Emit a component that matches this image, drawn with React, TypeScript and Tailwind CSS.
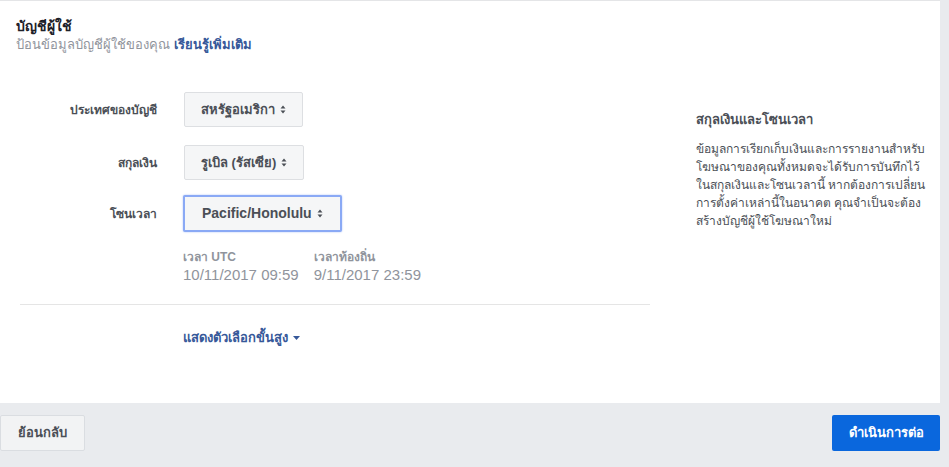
import React from 'react';

const font = { fontFamily: '"Liberation Sans", "Noto Sans", "DejaVu Sans", sans-serif' };

function SortArrows() {
  return (
    <svg width="6" height="9" viewBox="0 0 6 9" className="ml-[5px] shrink-0">
      <path d="M3 0.5 L5.5 3.5 L0.5 3.5 Z" fill="#4b4f56" />
      <path d="M3 8.5 L5.5 5.5 L0.5 5.5 Z" fill="#4b4f56" />
    </svg>
  );
}

function Select({ label, focused }: { label: string; focused?: boolean }) {
  return (
    <div
      className={`flex items-center rounded-[2px] bg-[#f5f6f7] font-bold text-[#4b4f56] ${
        focused
          ? 'h-[37px] px-[17px] border-2 border-[#8aa9f5] text-[14px] shadow-[0_0_2px_#a6bdf7]'
          : 'h-[35px] px-[16px] border border-[#dddfe2] text-[13px]'
      }`}
    >
      {label}
      <SortArrows />
    </div>
  );
}

const rows = [
  { label: 'ประเทศของบัญชี', value: 'สหรัฐอเมริกา', gap: 'mt-0' },
  { label: 'สกุลเงิน', value: 'รูเบิล (รัสเซีย)', gap: 'mt-[18px]' },
  { label: 'โซนเวลา', value: 'Pacific/Honolulu', focused: true, gap: 'mt-[15px]' },
];

export default function App() {
  return (
    <div className="w-[949px] h-[467px] bg-[#e9ebee] flex flex-col overflow-hidden" style={font}>
      <div className="flex h-[403px] shrink-0">
        <div className="w-[940px] bg-white border-t border-[#e4e5e7]">
          {/* header */}
          <div className="pl-[16px] pt-[16px]">
            <div className="text-[14px] leading-[18px] font-bold text-[#1d2129]">บัญชีผู้ใช้</div>
            <div className="text-[13px] leading-[20px] text-[#90949c]">
              ป้อนข้อมูลบัญชีผู้ใช้ของคุณ{' '}
              <span className="text-[#365899] font-bold">เรียนรู้เพิ่มเติม</span>
            </div>
          </div>

          <div className="flex">
            {/* form */}
            <div className="w-[650px] pl-[20px] pt-[37px]">
              <div className="flex flex-col">
                {rows.map((r) => (
                  <div key={r.label} className={`flex items-center ${r.gap}`}>
                    <div className="w-[137px] text-right text-[12px] font-bold text-[#4b4f56]">
                      {r.label}
                    </div>
                    <div className={r.focused ? 'ml-[26px]' : 'ml-[27px]'}>
                      <Select label={r.value} focused={r.focused} />
                    </div>
                  </div>
                ))}
              </div>

              <div className="flex pl-[163px] pt-[17px] gap-[15px]">
                <div>
                  <div className="text-[12px] leading-[16px] font-bold text-[#90949c]">เวลา UTC</div>
                  <div className="text-[15px] leading-[20px] text-[#90949c]">10/11/2017 09:59</div>
                </div>
                <div>
                  <div className="text-[12px] leading-[16px] font-bold text-[#90949c]">เวลาท้องถิ่น</div>
                  <div className="text-[15px] leading-[20px] text-[#90949c]">9/11/2017 23:59</div>
                </div>
              </div>

              <div className="mt-[19px] h-px bg-[#e5e5e5]" />

              <div className="pl-[163px] pt-[23px] flex items-center text-[13px] font-bold text-[#365899]">
                แสดงตัวเลือกขั้นสูง
                <svg width="7" height="4" viewBox="0 0 7 4" className="ml-[5px]">
                  <path d="M0 0 L7 0 L3.5 4 Z" fill="#365899" />
                </svg>
              </div>
            </div>

            {/* side note */}
            <div className="ml-[46px] w-[230px] pt-[56px] text-[#4b4f56]">
              <div className="text-[13px] leading-[18px] font-bold">สกุลเงินและโซนเวลา</div>
              <p className="mt-[11px] text-[12px] leading-[18px]">
                ข้อมูลการเรียกเก็บเงินและการรายงานสำหรับโฆษณาของคุณทั้งหมดจะได้รับการบันทึกไว้ในสกุลเงินและโซนเวลานี้ หากต้องการเปลี่ยนการตั้งค่าเหล่านี้ในอนาคต คุณจำเป็นจะต้องสร้างบัญชีผู้ใช้โฆษณาใหม่
              </p>
            </div>
          </div>
        </div>
      </div>

      {/* footer */}
      <div className="flex justify-between pt-[12px] pr-[9px]">
        <button className="h-[36px] w-[85px] rounded-[2px] border border-[#dadde1] bg-[#f2f3f4] text-[13px] font-bold text-[#4b4f56]">
          ย้อนกลับ
        </button>
        <button className="h-[36px] w-[108px] rounded-[2px] bg-[#0a67dd] text-[13px] font-bold text-white">
          ดำเนินการต่อ
        </button>
      </div>
    </div>
  );
}
